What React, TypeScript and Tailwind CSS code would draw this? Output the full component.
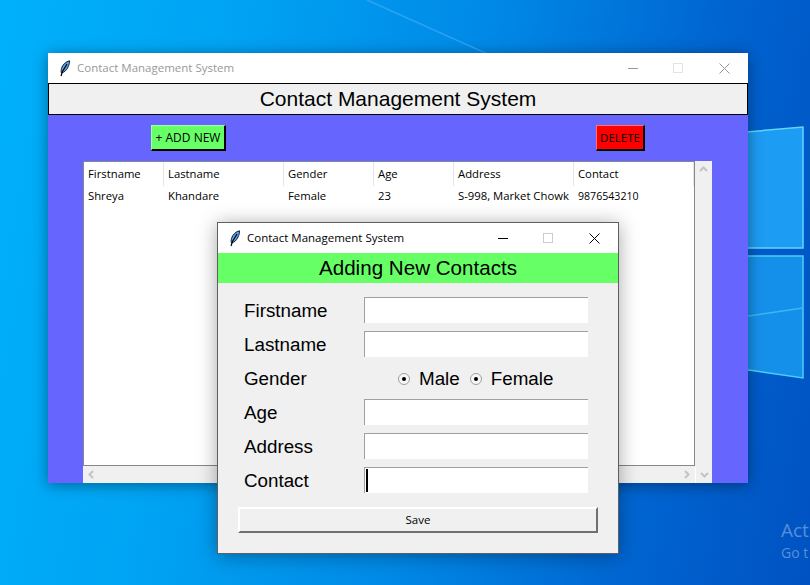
import React from "react";

const columns = [
  { label: "Firstname", value: "Shreya", width: "w-[80px]", size: "" },
  { label: "Lastname", value: "Khandare", width: "w-[120px]", size: "" },
  { label: "Gender", value: "Female", width: "w-[90px]", size: "" },
  { label: "Age", value: "23", width: "w-[80px]", size: "" },
  { label: "Address", value: "S-998, Market Chowk", width: "w-[120px]", size: "" },
  { label: "Contact", value: "9876543210", width: "w-[120px]", size: "pt-px text-[10.6px]" },
];

function Feather() {
  return (
    <svg width="12" height="17" viewBox="0 0 12 17" className="shrink-0">
      <path d="M10.5 .8C7 1.5 3.5 4.5 2.5 8.5 2 10.5 2 12 2.5 13 5 12.5 7.5 10.5 9 7 10.2 4.5 10.8 2.5 10.5 .8Z" fill="#5aa0e0" stroke="#10233c" strokeWidth="1" />
      <path d="M8 4 3.5 11.5 2 16" fill="none" stroke="#000" strokeWidth="1.2" />
    </svg>
  );
}

function TitleBar({ active }: { active: boolean }) {
  const stroke = active ? "#000000" : "#999999";
  return (
    <div className="flex h-[30px] shrink-0 items-center bg-white pl-[11px]">
      <Feather />
      <span className={`ml-[6px] text-[11.5px] ${active ? "text-black" : "text-[#999999]"}`}>
        Contact Management System
      </span>
      <div className="ml-auto flex h-full pr-px">
        <div className="flex w-[46px] items-center justify-center pl-px">
          <div className="h-px w-[10px]" style={{ backgroundColor: stroke }} />
        </div>
        <div className="flex w-[46px] items-center justify-center">
          <div className={`h-[10px] w-[10px] border ${active ? "border-[#cccccc]" : "border-[#e3e3e3]"}`} />
        </div>
        <div className="flex w-[46px] items-center justify-center">
          <svg width="11" height="11" viewBox="0 0 11 11">
            <path d="M.5 .5l10 10M10.5 .5l-10 10" stroke={stroke} strokeWidth="1" />
          </svg>
        </div>
      </div>
    </div>
  );
}

function Chevron({ d }: { d: string }) {
  return (
    <svg width="9" height="9" viewBox="0 0 9 9">
      <path d={d} fill="none" stroke="#c4c4c4" strokeWidth="2" />
    </svg>
  );
}

function Entry({ cursor }: { cursor?: boolean }) {
  return (
    <div className="relative h-[26px] w-[224px] border-t border-l border-[#a0a0a0] bg-white">
      {cursor && <div className="ml-px mt-[1px] h-[23px] w-[2px] bg-black" />}
    </div>
  );
}

function Radio({ label }: { label: string }) {
  return (
    <div className="flex items-center">
      <div className="flex h-[12px] w-[12px] items-center justify-center rounded-full border border-[#a0a0a0] bg-[#f6f6f6]">
        <div className="h-[4px] w-[4px] rounded-full bg-black" />
      </div>
      <span className="ml-[9px]">{label}</span>
    </div>
  );
}

export default function App() {
  const ui = { fontFamily: '"Open Sans", "Noto Sans", sans-serif' };
  const arial = { fontFamily: '"Liberation Sans", Arial, sans-serif' };

  return (
    <div
      className="relative h-[585px] w-[810px] overflow-hidden bg-[linear-gradient(100deg,#00b0fa_0%,#00a4f4_25%,#0088e6_55%,#0064d0_80%,#0052c2_100%)]"
      style={ui}
    >
      {/* wallpaper */}
      <svg width="810" height="585" className="absolute left-0 top-0">
        <path d="M367 0 548 81" stroke="#2ea2f2" strokeWidth="1.5" fill="none" />
        <path d="M620 143 803 127V248H620Z" fill="#1c9cf2" stroke="#5fd6fa" strokeWidth="1.5" />
        <path d="M620 256H803V378L620 351Z" fill="#1590ea" stroke="#4fcdf8" strokeWidth="1.5" />
        <path d="M620 335 803 308" stroke="#3cb6f4" strokeWidth="1.5" fill="none" />
      </svg>

      <div className="absolute left-[781px] top-[517px] whitespace-nowrap text-[19px] leading-[26px] text-white/35">
        Act
      </div>
      <div className="absolute left-[781px] top-[544px] whitespace-nowrap text-[14px] leading-[18px] text-white/35">
        Go t
      </div>

      {/* main window */}
      <div className="absolute left-[48px] top-[53px] flex h-[430px] w-[700px] flex-col bg-[#6666ff] shadow-[0_2px_14px_rgba(0,0,0,0.4)]">
        <TitleBar active={false} />
        <div
          className="flex h-[32px] shrink-0 items-center justify-center border border-black bg-[#f0f0f0] text-[21px] text-black"
          style={arial}
        >
          Contact Management System
        </div>

        <div className="flex pl-[103px] pt-[10px]">
          <button className="h-[26px] w-[75px] border-t border-r-2 border-b-2 border-l border-t-[#a3ffa3] border-r-black border-b-black border-l-[#a3ffa3] bg-[#66ff66] text-[12px] text-black">
            + ADD NEW
          </button>
          <button className="ml-[370px] h-[26px] w-[49px] border-t border-r-2 border-b-2 border-l border-t-[#ff7070] border-r-black border-b-black border-l-[#ff7070] bg-[#ff0000] text-[11.5px] text-black">
            DELETE
          </button>
        </div>

        <div className="ml-[35px] mt-[10px] grid h-[322px] w-[629px] grid-cols-[612px_17px] grid-rows-[305px_17px]">
          <div className="border border-[#828790] bg-white text-[11.3px] text-black">
            <div className="flex h-[24px]">
              {columns.map((c) => (
                <div key={c.label} className={`${c.width} flex items-center border-r border-[#e5e5e5] pl-[4px]`}>
                  {c.label}
                </div>
              ))}
            </div>
            <div className="flex h-[21px]">
              {columns.map((c) => (
                <div key={c.label} className={`${c.width} ${c.size} flex items-center whitespace-nowrap pl-[4px]`}>
                  {c.value}
                </div>
              ))}
            </div>
          </div>
          <div className="flex justify-center bg-[#f0f0f0] pt-[4px]">
            <Chevron d="M1 6 4.5 2.5 8 6" />
          </div>
          <div className="flex items-center justify-between bg-[#f0f0f0] px-[4px]">
            <Chevron d="M6 1 2.5 4.5 6 8" />
            <Chevron d="M3 1 6.5 4.5 3 8" />
          </div>
          <div className="flex items-center justify-center border-l border-white bg-[#f0f0f0]">
            <Chevron d="M1 3 4.5 6.5 8 3" />
          </div>
        </div>
      </div>

      {/* add new dialog */}
      <div className="absolute left-[217px] top-[222px] flex h-[332px] w-[402px] flex-col border border-[#5f5f5f] bg-[#f0f0f0] shadow-[0_2px_18px_rgba(0,0,0,0.35)]">
        <TitleBar active />
        <div className="flex h-[30px] shrink-0 items-center justify-center bg-[#66ff66] text-[20.6px] text-black" style={arial}>
          Adding New Contacts
        </div>

        <div className="pt-[10px] pl-[26px] text-[18.8px] text-black" style={arial}>
          {["Firstname", "Lastname", "Gender", "Age", "Address", "Contact"].map((label) => (
            <div key={label} className="flex h-[34px] items-center">
              <div className="w-[120px] pt-[2px]">{label}</div>
              {label === "Gender" ? (
                <div className="ml-[34px] flex gap-[10px] pt-[2px]">
                  <Radio label="Male" />
                  <Radio label="Female" />
                </div>
              ) : (
                <Entry cursor={label === "Contact"} />
              )}
            </div>
          ))}
        </div>

        <button className="ml-[20px] mt-[10px] h-[26px] w-[360px] border-t-2 border-r-2 border-b-2 border-l-2 border-t-white border-r-[#707070] border-b-[#707070] border-l-white bg-[#f0f0f0] text-[11.5px] text-black">
          Save
        </button>
      </div>
    </div>
  );
}
